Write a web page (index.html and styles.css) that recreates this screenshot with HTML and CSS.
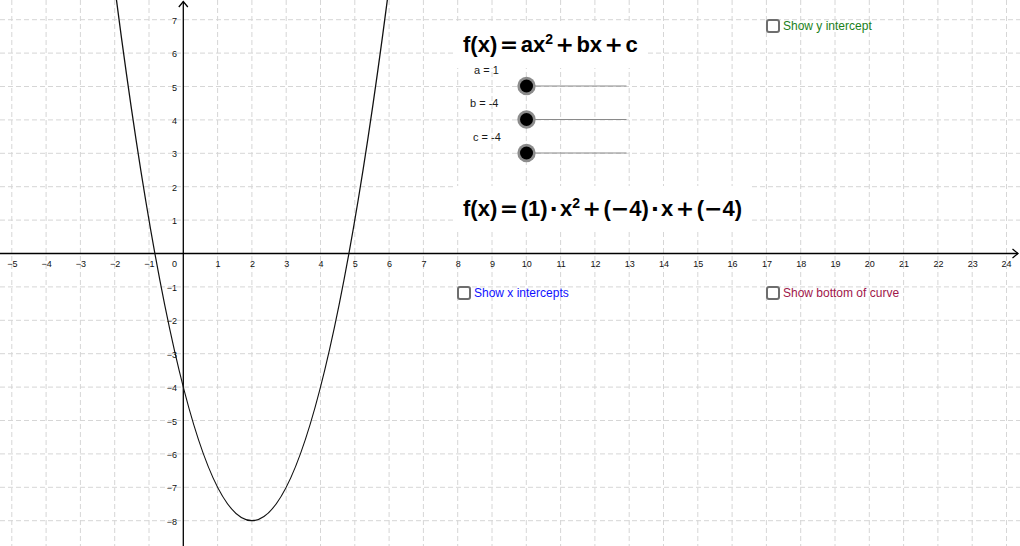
FILE: index.html
```html
<!DOCTYPE html>
<html lang="en">
<head>
<meta charset="utf-8">
<title>Quadratic function</title>
<link rel="stylesheet" href="styles.css">
</head>
<body>
<div class="applet">
  <svg class="graph" width="1020" height="546" viewBox="0 0 1020 546" xmlns="http://www.w3.org/2000/svg">
    <g class="grid">
      <line x1="11.8" y1="0" x2="11.8" y2="546"/>
      <line x1="46.1" y1="0" x2="46.1" y2="546"/>
      <line x1="80.4" y1="0" x2="80.4" y2="546"/>
      <line x1="114.7" y1="0" x2="114.7" y2="546"/>
      <line x1="149" y1="0" x2="149" y2="546"/>
      <line x1="217.6" y1="0" x2="217.6" y2="546"/>
      <line x1="251.9" y1="0" x2="251.9" y2="546"/>
      <line x1="286.2" y1="0" x2="286.2" y2="546"/>
      <line x1="320.5" y1="0" x2="320.5" y2="546"/>
      <line x1="354.8" y1="0" x2="354.8" y2="546"/>
      <line x1="389.1" y1="0" x2="389.1" y2="546"/>
      <line x1="423.4" y1="0" x2="423.4" y2="546"/>
      <line x1="457.7" y1="0" x2="457.7" y2="546"/>
      <line x1="492" y1="0" x2="492" y2="546"/>
      <line x1="526.3" y1="0" x2="526.3" y2="546"/>
      <line x1="560.6" y1="0" x2="560.6" y2="546"/>
      <line x1="594.9" y1="0" x2="594.9" y2="546"/>
      <line x1="629.2" y1="0" x2="629.2" y2="546"/>
      <line x1="663.5" y1="0" x2="663.5" y2="546"/>
      <line x1="697.8" y1="0" x2="697.8" y2="546"/>
      <line x1="732.1" y1="0" x2="732.1" y2="546"/>
      <line x1="766.4" y1="0" x2="766.4" y2="546"/>
      <line x1="800.7" y1="0" x2="800.7" y2="546"/>
      <line x1="835" y1="0" x2="835" y2="546"/>
      <line x1="869.3" y1="0" x2="869.3" y2="546"/>
      <line x1="903.6" y1="0" x2="903.6" y2="546"/>
      <line x1="937.9" y1="0" x2="937.9" y2="546"/>
      <line x1="972.2" y1="0" x2="972.2" y2="546"/>
      <line x1="1006.5" y1="0" x2="1006.5" y2="546"/>
      <line x1="0" y1="19.7" x2="1020" y2="19.7"/>
      <line x1="0" y1="53.1" x2="1020" y2="53.1"/>
      <line x1="0" y1="86.5" x2="1020" y2="86.5"/>
      <line x1="0" y1="119.9" x2="1020" y2="119.9"/>
      <line x1="0" y1="153.3" x2="1020" y2="153.3"/>
      <line x1="0" y1="186.7" x2="1020" y2="186.7"/>
      <line x1="0" y1="220.1" x2="1020" y2="220.1"/>
      <line x1="0" y1="286.9" x2="1020" y2="286.9"/>
      <line x1="0" y1="320.3" x2="1020" y2="320.3"/>
      <line x1="0" y1="353.7" x2="1020" y2="353.7"/>
      <line x1="0" y1="387.1" x2="1020" y2="387.1"/>
      <line x1="0" y1="420.5" x2="1020" y2="420.5"/>
      <line x1="0" y1="453.9" x2="1020" y2="453.9"/>
      <line x1="0" y1="487.3" x2="1020" y2="487.3"/>
      <line x1="0" y1="520.7" x2="1020" y2="520.7"/>
    </g>

    <g class="axes">
      <line x1="0" y1="253.5" x2="1018" y2="253.5"/>
      <polyline points="1012.5,249 1018,253.5 1012.5,258"/>
      <line x1="183.3" y1="546" x2="183.3" y2="1.5"/>
      <polyline points="178.8,7 183.3,1.5 187.8,7"/>
    </g>

    <g class="xlabels">
      <text x="12.3" y="267">−5</text>
      <text x="46.6" y="267">−4</text>
      <text x="80.9" y="267">−3</text>
      <text x="115.2" y="267">−2</text>
      <text x="149.5" y="267">−1</text>
      <text x="218.1" y="267">1</text>
      <text x="252.4" y="267">2</text>
      <text x="286.7" y="267">3</text>
      <text x="321" y="267">4</text>
      <text x="355.3" y="267">5</text>
      <text x="389.6" y="267">6</text>
      <text x="423.9" y="267">7</text>
      <text x="458.2" y="267">8</text>
      <text x="492.5" y="267">9</text>
      <text x="526.8" y="267">10</text>
      <text x="561.1" y="267">11</text>
      <text x="595.4" y="267">12</text>
      <text x="629.7" y="267">13</text>
      <text x="664" y="267">14</text>
      <text x="698.3" y="267">15</text>
      <text x="732.6" y="267">16</text>
      <text x="766.9" y="267">17</text>
      <text x="801.2" y="267">18</text>
      <text x="835.5" y="267">19</text>
      <text x="869.8" y="267">20</text>
      <text x="904.1" y="267">21</text>
      <text x="938.4" y="267">22</text>
      <text x="972.7" y="267">23</text>
      <text x="1006.5" y="267">24</text>
    </g>

    <g class="ylabels">
      <text x="177" y="267">0</text>
      <text x="177" y="23.7">7</text>
      <text x="177" y="57.1">6</text>
      <text x="177" y="90.5">5</text>
      <text x="177" y="123.9">4</text>
      <text x="177" y="157.3">3</text>
      <text x="177" y="190.7">2</text>
      <text x="177" y="224.1">1</text>
      <text x="177" y="290.9">−1</text>
      <text x="177" y="324.3">−2</text>
      <text x="177" y="357.7">−3</text>
      <text x="177" y="391.1">−4</text>
      <text x="177" y="424.5">−5</text>
      <text x="177" y="457.9">−6</text>
      <text x="177" y="491.3">−7</text>
      <text x="177" y="524.7">−8</text>
    </g>

    <path class="curve" d="M107.84,-68.48 Q251.9,1109.88 395.96,-68.48"/>

    <g class="slider">
      <line x1="526.5" y1="86" x2="626.5" y2="86"/>
      <circle class="halo" cx="526.5" cy="86" r="9.2"/>
      <circle class="knob" cx="526.5" cy="86" r="6.5"/>
    </g>
    <g class="slider">
      <line x1="526.5" y1="119.5" x2="626.5" y2="119.5"/>
      <circle class="halo" cx="526.5" cy="119.5" r="9.2"/>
      <circle class="knob" cx="526.5" cy="119.5" r="6.5"/>
    </g>
    <g class="slider">
      <line x1="526.5" y1="153" x2="626.5" y2="153"/>
      <circle class="halo" cx="526.5" cy="153" r="9.2"/>
      <circle class="knob" cx="526.5" cy="153" r="6.5"/>
    </g>
  </svg>

  <div class="formula formula-general">
    <span>f(x)</span><span class="op">=</span><span>ax<span class="sup">2</span></span><span class="op">+</span><span>bx</span><span class="op">+</span><span>c</span>
  </div>

  <div class="formula formula-values">
    <span>f(x)</span><span class="op">=</span><span>(1)</span><span class="op dot">·</span><span>x<span class="sup">2</span></span><span class="op">+</span><span>(<span class="minus">−</span>4)</span><span class="op dot">·</span><span>x</span><span class="op">+</span><span>(<span class="minus">−</span>4)</span>
  </div>

  <div class="slider-label label-a">a = 1</div>
  <div class="slider-label label-b">b = -4</div>
  <div class="slider-label label-c">c = -4</div>

  <label class="check check-y"><span class="box"></span><span class="check-text">Show y intercept</span></label>
  <label class="check check-x"><span class="box"></span><span class="check-text">Show x intercepts</span></label>
  <label class="check check-bottom"><span class="box"></span><span class="check-text">Show bottom of curve</span></label>
</div>
</body>
</html>
```

FILE: styles.css
```css
html, body {
  margin: 0;
  padding: 0;
  background: #ffffff;
}

.applet {
  position: relative;
  width: 1020px;
  height: 546px;
  overflow: hidden;
  background: #ffffff;
  font-family: "Liberation Sans", Arial, sans-serif;
}

.graph {
  display: block;
}

.grid line {
  stroke: #d6d6d6;
  stroke-width: 1;
  stroke-dasharray: 5 3;
}

.axes line,
.axes polyline {
  stroke: #000000;
  stroke-width: 1.3;
  fill: none;
}

.xlabels text,
.ylabels text {
  font-family: "Liberation Sans", Arial, sans-serif;
  font-size: 9px;
  fill: #111111;
}

.xlabels text {
  text-anchor: middle;
}

.ylabels text {
  text-anchor: end;
}

.curve {
  fill: none;
  stroke: #111111;
  stroke-width: 1.3;
}

.slider line {
  stroke: #8a8a8a;
  stroke-width: 1;
}

.slider .halo {
  fill: #8c8c8c;
}

.slider .knob {
  fill: #000000;
}

/* Objects placed on the GeoGebra canvas */
.formula {
  position: absolute;
  background: #ffffff;
  font-family: "Liberation Sans", Arial, sans-serif;
  font-weight: bold;
  font-size: 22px;
  line-height: 30px;
  color: #000000;
  white-space: nowrap;
  display: flex;
  align-items: baseline;
}

.formula-general {
  left: 453px;
  top: 24px;
  padding: 6px 10px 8px 10px;
}

.formula-values {
  left: 453px;
  top: 186px;
  padding: 8px 10px 8px 10px;
}

.op {
  font-family: "DejaVu Sans", sans-serif;
  font-weight: bold;
  margin: 0 2.5px;
}

.op.dot {
  margin: 0 2px;
}

.minus {
  font-family: "DejaVu Sans", sans-serif;
  font-weight: bold;
}

.sup {
  font-size: 14px;
  line-height: 0;
  vertical-align: 8px;
}

.slider-label {
  position: absolute;
  font-size: 11px;
  line-height: 13px;
  color: #1a1a1a;
  white-space: nowrap;
}

.label-a { left: 474px; top: 64px; }
.label-b { left: 470px; top: 97px; }
.label-c { left: 473px; top: 131px; }

.check {
  position: absolute;
  display: flex;
  align-items: center;
  gap: 3px;
  height: 14px;
  font-size: 12px;
  line-height: 14px;
  white-space: nowrap;
}

.box {
  width: 14px;
  height: 14px;
  box-sizing: border-box;
  border: 2px solid #6e6e6e;
  border-radius: 3px;
  background: #ffffff;
}

.check-y { left: 766px; top: 19px; color: #1b7f1b; }
.check-x { left: 457px; top: 286px; color: #1010ff; }
.check-bottom { left: 766px; top: 286px; color: #a0164a; }
```
